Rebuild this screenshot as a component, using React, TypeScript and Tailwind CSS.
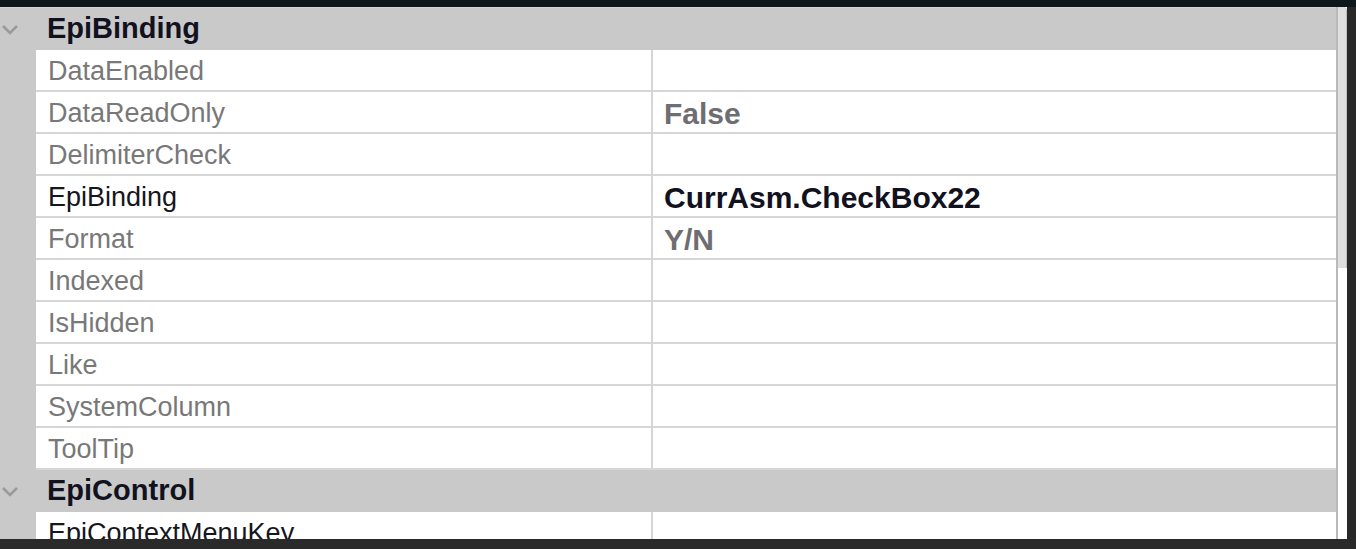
import React from "react";

type Row = { name: string; value?: string; nameDark?: boolean; valueDark?: boolean };

const binding: Row[] = [
  { name: "DataEnabled" },
  { name: "DataReadOnly", value: "False" },
  { name: "DelimiterCheck" },
  { name: "EpiBinding", value: "CurrAsm.CheckBox22", nameDark: true, valueDark: true },
  { name: "Format", value: "Y/N" },
  { name: "Indexed" },
  { name: "IsHidden" },
  { name: "Like" },
  { name: "SystemColumn" },
  { name: "ToolTip" },
];

function Chevron() {
  return (
    <svg width="18" height="12" viewBox="0 0 18 12" className="block">
      <polyline points="2,2 9,9 16,2" fill="none" stroke="#9a9a9a" strokeWidth="2.6" />
    </svg>
  );
}

function Header({ title }: { title: string }) {
  return (
    <div className="flex h-[42px] shrink-0 items-center bg-[#c9c9c9]">
      <div className="flex w-[36px] shrink-0 justify-start pl-[1px] pt-[2px]">
        <Chevron />
      </div>
      <div className="pl-[11px] text-[29px] font-bold text-[#12121e]">{title}</div>
    </div>
  );
}

function PropRow({ r }: { r: Row }) {
  return (
    <div className="flex h-[42px] shrink-0">
      <div className="w-[36px] shrink-0 bg-[#c9c9c9]" />
      <div className="flex flex-1 border-b-2 border-[#d6d6d6] bg-white">
        <div
          className={
            "flex w-[617px] shrink-0 items-center border-r-2 border-[#d6d6d6] pl-[12px] pt-[2px] text-[27px] " +
            (r.nameDark ? "text-[#161620]" : "text-[#787878]")
          }
        >
          {r.name}
        </div>
        <div
          className={
            "flex flex-1 items-center pl-[11px] pt-[2px] text-[30px] font-bold " +
            (r.valueDark ? "text-[#12121e]" : "text-[#6e6e72]")
          }
        >
          {r.value ?? ""}
        </div>
      </div>
    </div>
  );
}

export default function App() {
  return (
    <div
      className="flex h-[549px] w-[1356px] flex-col overflow-hidden bg-[#282828]"
      style={{ fontFamily: '"Liberation Sans", Arial, sans-serif' }}
    >
      <div className="h-[7px] shrink-0 bg-[#0e1719]" />
      <div className="flex h-[532px] w-[1347px] shrink-0 overflow-hidden">
        <div className="flex w-[1336px] shrink-0 flex-col overflow-hidden">
          <div className="h-[1px] shrink-0 bg-[#d4d4d4]" />
          <Header title="EpiBinding" />
          {binding.map((r) => (
            <PropRow key={r.name} r={r} />
          ))}
          <Header title="EpiControl" />
          <PropRow r={{ name: "EpiContextMenuKey", nameDark: true }} />
        </div>
        <div className="w-[2px] shrink-0 bg-[#b9b9b9]" />
        <div className="flex w-[9px] shrink-0 flex-col bg-white">
          <div className="h-[261px] shrink-0 rounded-tr-[4px] border-r border-[#bdbdbd] bg-[#dedede]" />
        </div>
      </div>
      <div className="flex-1 bg-[#2a2a2a]" />
    </div>
  );
}
